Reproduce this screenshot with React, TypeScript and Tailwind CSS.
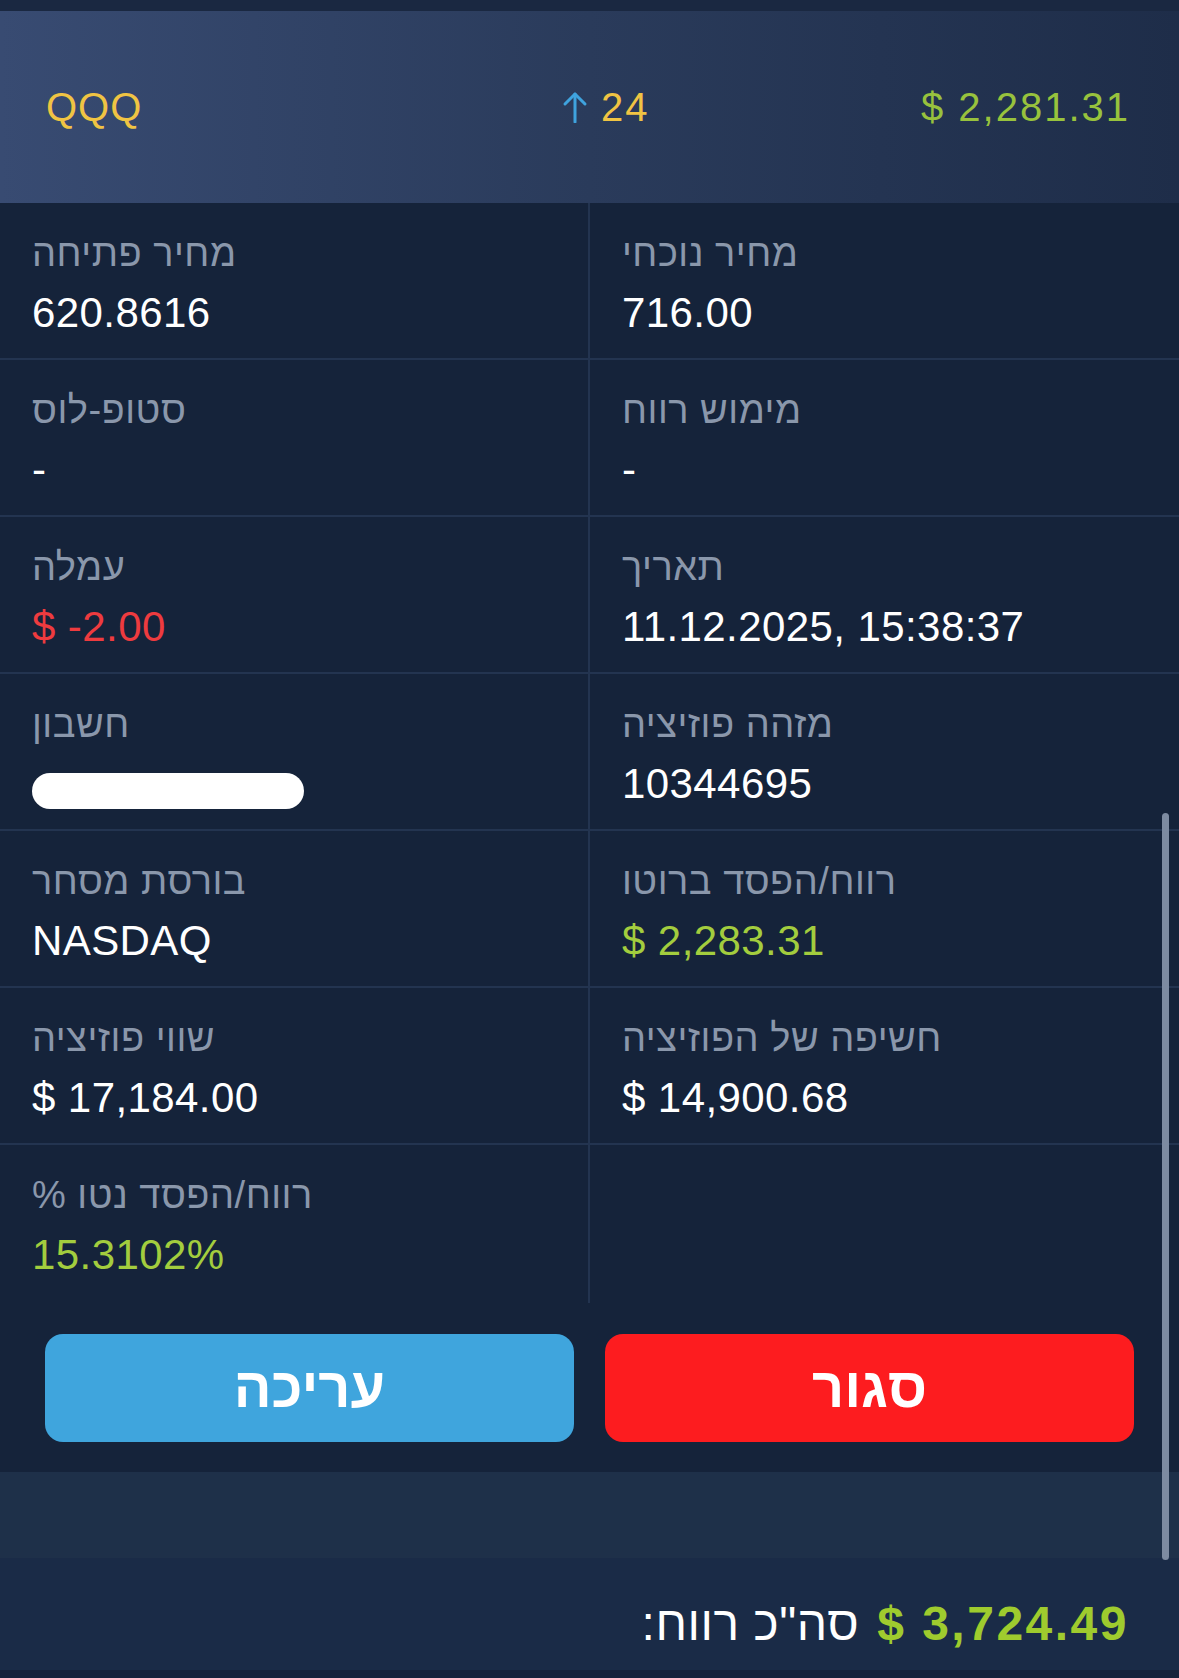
const font = "font-['Liberation_Sans',Arial,'DejaVu_Sans',sans-serif]";

type Cell = {
  label: string;
  value?: string;
  tone?: "white" | "green" | "red";
  redacted?: boolean;
};

const rows: [Cell, Cell | null][] = [
  [
    { label: "מחיר פתיחה", value: "620.8616" },
    { label: "מחיר נוכחי", value: "716.00" },
  ],
  [
    { label: "סטופ-לוס", value: "-" },
    { label: "מימוש רווח", value: "-" },
  ],
  [
    { label: "עמלה", value: "$ -2.00", tone: "red" },
    { label: "תאריך", value: "11.12.2025, 15:38:37" },
  ],
  [
    { label: "חשבון", redacted: true },
    { label: "מזהה פוזיציה", value: "10344695" },
  ],
  [
    { label: "בורסת מסחר", value: "NASDAQ" },
    { label: "רווח/הפסד ברוטו", value: "$ 2,283.31", tone: "green" },
  ],
  [
    { label: "שווי פוזיציה", value: "$ 17,184.00" },
    { label: "חשיפה של הפוזיציה", value: "$ 14,900.68" },
  ],
  [{ label: "רווח/הפסד נטו %", value: "15.3102%", tone: "green" }, null],
];

const toneClass = {
  white: "text-white",
  green: "text-[#a3cd3e]",
  red: "text-[#ee3b3f]",
};

function InfoCell({ cell, left }: { cell: Cell | null; left: boolean }) {
  return (
    <div
      className={
        left
          ? "pl-[32px] pt-[28px] border-r-2 border-[#233450]"
          : "pl-[32px] pt-[28px]"
      }
    >
      {cell && (
        <>
          <div dir="rtl" className="text-left text-[38px] leading-[44px] tracking-[0.5px] text-[#8a97ab]">
            {cell.label}
          </div>
          {cell.redacted ? (
            <div className="mt-[27px] h-[36px] w-[272px] rounded-full bg-white" />
          ) : (
            <div
              className={`mt-[14px] text-[42px] leading-[48px] tracking-[0.01em] ${
                toneClass[cell.tone ?? "white"]
              }`}
            >
              {cell.value}
            </div>
          )}
        </>
      )}
    </div>
  );
}

function UpArrow() {
  return (
    <svg width="26" height="32" viewBox="0 0 26 32" fill="none" stroke="#3fa3de" strokeWidth="3" strokeLinecap="round" strokeLinejoin="round">
      <path d="M13 31V3" />
      <path d="M3 13L13 3l10 10" />
    </svg>
  );
}

export default function App() {
  return (
    <div className={`relative w-[1179px] h-[1678px] overflow-hidden bg-[#15233a] ${font}`}>
      <div className="h-[11px] bg-[#1a2841]" />

      {/* position header */}
      <div className="h-[192px] flex items-center pl-[46px] pr-[49px] bg-gradient-to-r from-[#384b72] via-[#2a3b5b] to-[#1e2d49]">
        <div className="w-[516px] text-[40px] tracking-[1px] text-[#f0c443]">QQQ</div>
        <div className="flex items-center gap-[13px]">
          <UpArrow />
          <span className="text-[40px] tracking-[2px] text-[#f0c443]">24</span>
        </div>
        <div className="flex-1 text-right text-[40px] tracking-[2px] text-[#98c23d]">$ 2,281.31</div>
      </div>

      {/* details grid */}
      <div>
        {rows.map(([l, r], i) => (
          <div
            key={i}
            className={
              i === rows.length - 1
                ? "grid grid-cols-[590px_1fr] h-[158px]"
                : "grid grid-cols-[590px_1fr] h-[157px] border-b-2 border-[#233450]"
            }
          >
            <InfoCell cell={l} left />
            <InfoCell cell={r} left={false} />
          </div>
        ))}
      </div>

      {/* actions */}
      <div className="grid grid-cols-2 gap-[31px] px-[45px] pt-[31px] pb-[30px]">
        <button className="h-[108px] rounded-[18px] bg-[#3fa5dd] text-white text-[56px] font-bold">
          עריכה
        </button>
        <button className="h-[108px] rounded-[18px] bg-[#fd1c1f] text-white text-[56px] font-bold">
          סגור
        </button>
      </div>

      <div className="h-[86px] bg-[#1e3049]" />

      {/* total */}
      <div className="h-[112px] bg-[#1a2b47] flex items-center justify-end pr-[50px] pt-[20px] gap-[18px]">
        <span dir="rtl" className="text-[48px] tracking-[0.5px] text-white">סה"כ רווח:</span>
        <span className="text-[48px] font-bold tracking-[2.5px] text-[#9fcb2e]">$ 3,724.49</span>
      </div>
      <div className="h-[8px] bg-[#15233b]" />

      {/* scroll indicator */}
      <div className="absolute left-[1162px] top-[813px] w-[7px] h-[747px] rounded-full bg-[#7d8ba1]" />
    </div>
  );
}
